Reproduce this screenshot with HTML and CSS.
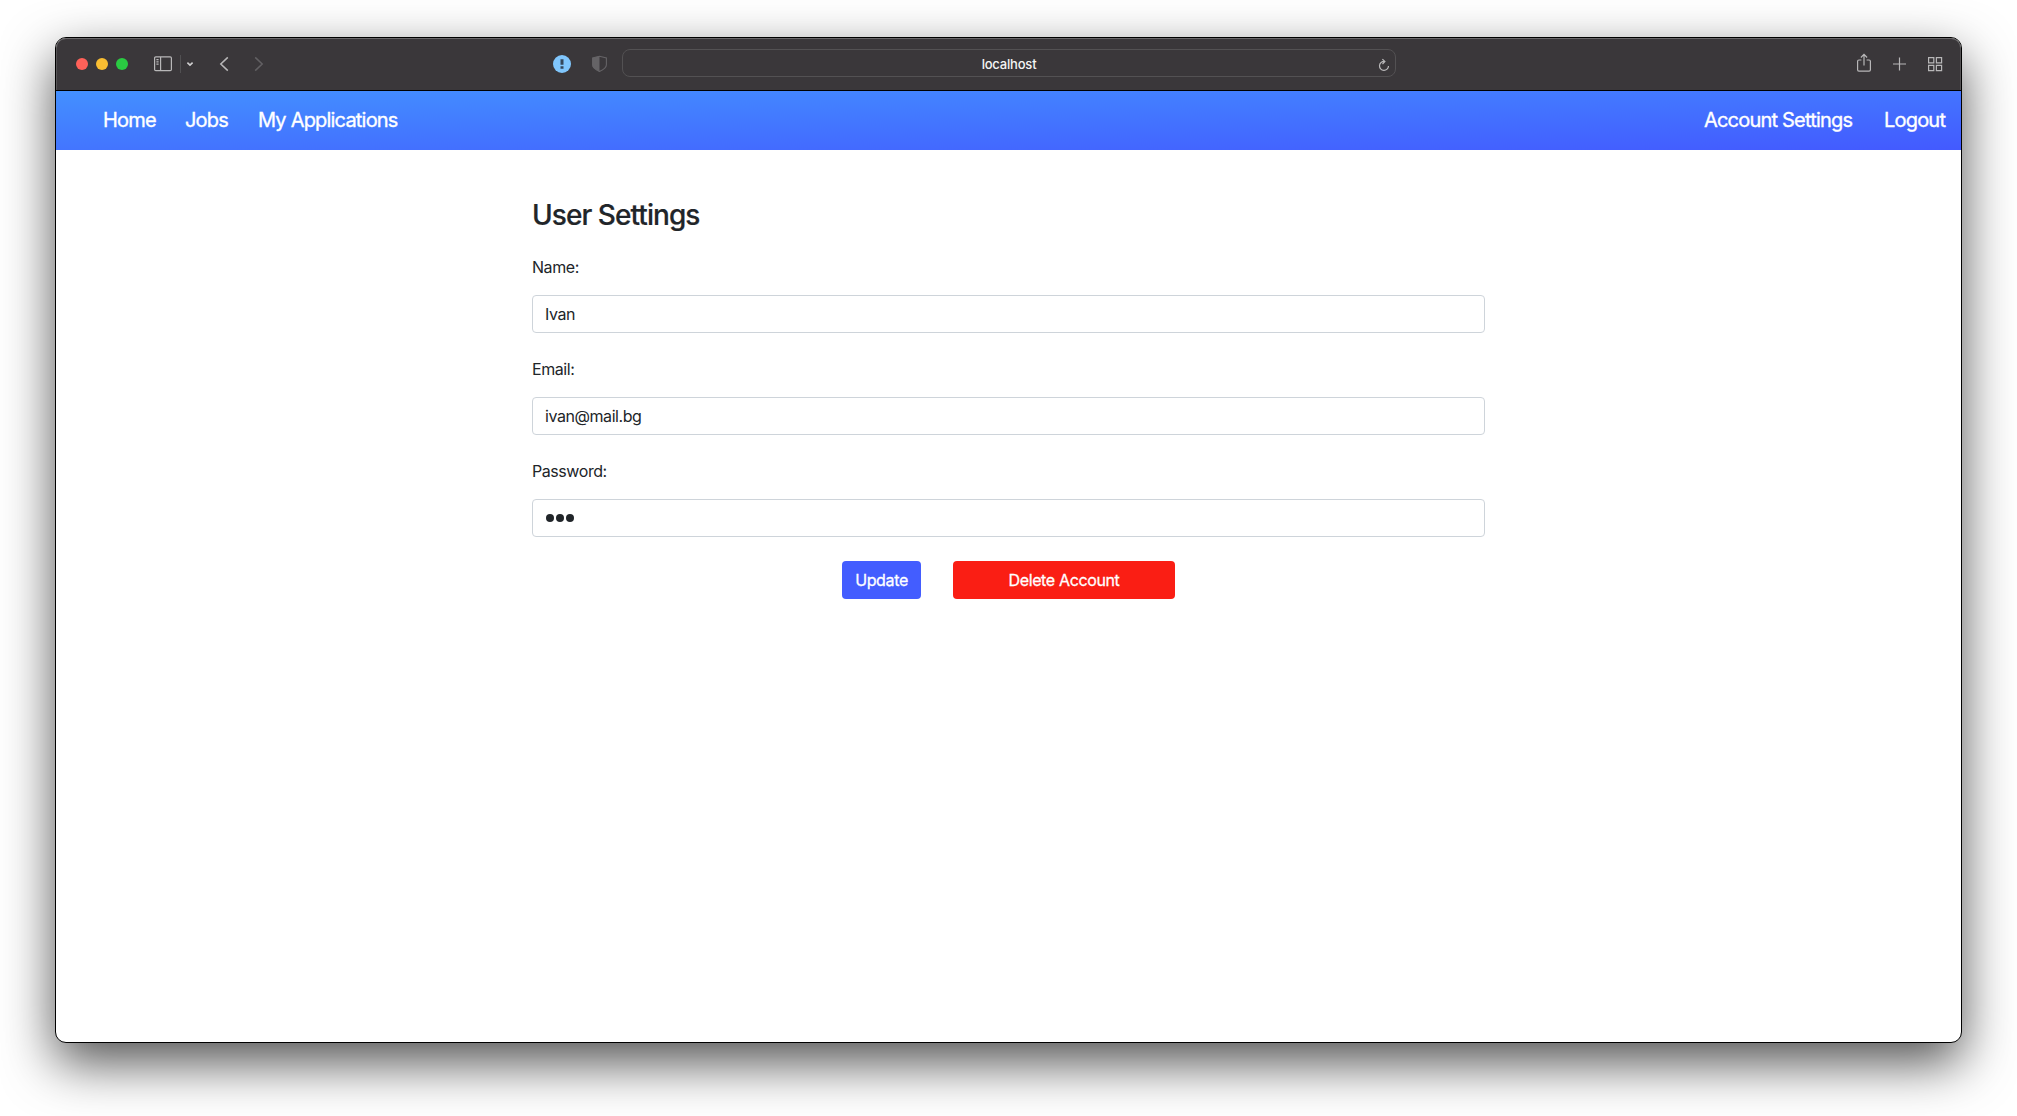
FILE: index.html
```html
<!DOCTYPE html>
<html lang="en">
<head>
<meta charset="utf-8">
<title>User Settings</title>
<link rel="stylesheet" href="styles.css">
</head>
<body>
<div class="window">
  <header class="toolbar">
    <span class="light red"></span>
    <span class="light yellow"></span>
    <span class="light green"></span>
    <svg class="icon sidebar" width="18" height="16" viewBox="0 0 18 16"><rect x=".6" y=".9" width="16.8" height="13.8" rx="1.2"/><path d="M6.6 1v13.6M2.4 3.6h2.2M2.4 5.9h2.2M2.4 8.2h2.2"/></svg>
    <span class="divider"></span>
    <svg class="icon chevron" width="8" height="6" viewBox="0 0 8 6"><path d="M1.4 1.6 4 4.1l2.6-2.5"/></svg>
    <svg class="icon back" width="10" height="16" viewBox="0 0 10 16"><path d="M8.8 1.4 1.8 8l7 6.6"/></svg>
    <svg class="icon forward" width="10" height="16" viewBox="0 0 10 16"><path d="M1.2 1.4 8.2 8l-7 6.6"/></svg>
    <svg class="badge" width="18" height="18" viewBox="0 0 18 18"><circle cx="9" cy="9" r="9" fill="#80c6fc"/><path d="M7.5 4.2h3v5.6h-3zM7.5 11.2h3v2.6h-3z" fill="#34475a"/></svg>
    <svg class="shield" width="17" height="18" viewBox="0 0 17 18"><path d="M8.5 1.2 15.4 3v6.8c0 3.2-3.5 5.2-6.900 6.800-3.400-1.600-6.900-3.600-6.900-6.800V3z" fill="none" stroke="#656366" stroke-width="1.1"/><path d="M8.5 1 1.4 3v6.800c0 3.200 3.600 5.200 7.100 6.900z" fill="#656366"/></svg>
    <div class="address"><span>localhost</span>
      <svg class="icon reload" width="12" height="14" viewBox="0 0 12 14"><path d="M6.4 3.4A4.5 4.5 0 1 0 10.5 8M4.4 1.1 6.9 3.5 4.5 6"/></svg>
    </div>
    <svg class="icon share" width="16" height="20" viewBox="0 0 16 20"><path d="M5.4 7H2.9Q1.6 7 1.6 8.3v8.5q0 1.3 1.3 1.3h10.2q1.3 0 1.3-1.3V8.3Q14.4 7 13.1 7h-2.5M8 12.5V1.500M4.900 4.500 8 1.400l3.100 3.100"/></svg>
    <svg class="icon plus" width="15" height="16" viewBox="0 0 15 16"><path d="M7.5 1.500v13M1 8h13"/></svg>
    <svg class="icon grid" width="16" height="16" viewBox="0 0 16 16"><path d="M1.6 1.6h5.2v5.2H1.6zM9.4 1.6h5.2v5.2H9.4zM1.6 9.4h5.2v5.2H1.6zM9.4 9.4h5.2v5.2H9.4z"/></svg>
  </header>
  <nav class="nav">
    <a class="home">Home</a>
    <a class="jobs">Jobs</a>
    <a class="apps">My Applications</a>
    <a class="account">Account Settings</a>
    <a class="logout">Logout</a>
  </nav>
  <main class="settings">
    <h2>User Settings</h2>
    <label for="name">Name:</label>
    <input id="name" type="text" value="Ivan">
    <label for="email">Email:</label>
    <input id="email" type="text" value="ivan@mail.bg">
    <label for="password">Password:</label>
    <div class="field" id="password"><i></i><i></i><i></i></div>
    <div class="actions">
      <button class="update">Update</button>
      <button class="delete">Delete Account</button>
    </div>
  </main>
</div>
</body>
</html>
```
FILE: styles.css
```css
* { box-sizing: border-box; }

body {
  margin: 0;
  height: 1116px;
  padding: 37px 55px 73px;
  background: #fff;
  color: #212529;
  font: 400 16px/24px Inter, "Liberation Sans", sans-serif;
  letter-spacing: -0.43px;
  overflow: hidden;
}

.window {
  height: 1006px;
  border: 1px solid #000;
  border-radius: 11px;
  background: #fff;
  overflow: hidden;
  box-shadow: 0 20px 52px rgba(0, 0, 0, .68);
}

.toolbar {
  display: flex;
  align-items: center;
  height: 53px;
  padding: 0 18px 0 20px;
  background: #3a373a;
  border-bottom: 1px solid #000;
  border-radius: 10px 10px 0 0;
  box-shadow: inset 0 1px #6a686a, inset 1px 0 #565456, inset -1px 0 #565456;
}
.toolbar > * { flex: none; }

.light { width: 12px; height: 12px; border-radius: 50%; margin-right: 8px; }
.red { background: #ff6159; }
.yellow { background: #f9be32; }
.green { background: #2acb42; }

.icon { fill: none; stroke: #b8b7b8; stroke-width: 1.2; }
.sidebar { margin-left: 18px; }
.divider { width: 1px; height: 18px; margin-left: 8px; background: #515052; }
.chevron { margin-left: 5px; stroke: #d0cfd0; stroke-width: 1.6; }
.back { margin-left: 25px; stroke-width: 1.5; }
.forward { margin-left: 25px; stroke: #626063; stroke-width: 1.5; }
.badge { margin-left: 289px; }
.shield { margin-left: 20px; }

.address {
  display: flex;
  align-items: center;
  justify-content: flex-end;
  width: 774px;
  height: 28px;
  margin: -2px auto 0 14px;
  padding-right: 5px;
  border: 1px solid #535153;
  border-radius: 8px;
  color: #f4f4f4;
  font-size: 13px;
  font-weight: 500;
  letter-spacing: -0.2px;
}
.address span { flex: 1; padding: 2px 0 0 17px; text-align: center; }
.reload { margin-top: 3px; }

.share { margin-right: 20px; margin-top: -2px; }
.plus { margin-right: 20px; }

.nav {
  display: flex;
  align-items: center;
  height: 59px;
  padding: 0 16px 2px 47px;
  background: linear-gradient(to bottom right, #4390ff, #435aff);
  color: #fff;
  font-size: 20px;
  line-height: 30px;
  letter-spacing: -0.8px;
  white-space: nowrap;
  -webkit-text-stroke: .35px #fff;
}
.nav a { margin-right: 30px; }
.nav .home { width: 52px; }
.nav .jobs { width: 43px; }
.nav .account { width: 150px; margin-left: auto; }
.nav .logout { width: 61px; margin-right: 0; }

.settings {
  width: 953px;
  margin: 0 auto;
  padding-top: 48px;
  display: flex;
  flex-direction: column;
}

h2 {
  margin: 0 0 23px;
  font-size: 28px;
  font-weight: 500;
  line-height: 34px;
  letter-spacing: -0.94px;
  -webkit-text-stroke: .2px #212529;
}

label { margin-bottom: 16px; }

input, .field {
  width: 100%;
  height: 38px;
  margin: 0 0 24px;
  padding: 0 12px;
  border: 1px solid #ced4da;
  border-radius: 4px;
  background: #fff;
  color: inherit;
  font: inherit;
  letter-spacing: inherit;
}
.field { display: flex; align-items: center; gap: 2px; padding-left: 13px; }
.field i { width: 8px; height: 8px; border-radius: 50%; background: #212529; }

.actions { display: flex; justify-content: center; gap: 32px; }

button {
  height: 38px;
  padding: 0;
  border: 0;
  border-radius: 4px;
  color: #fff;
  font: inherit;
  letter-spacing: -0.36px;
  -webkit-text-stroke: .3px #fff;
}
.update { width: 79px; background: #435dff; }
.delete { width: 222px; background: #fa1e14; }
```
